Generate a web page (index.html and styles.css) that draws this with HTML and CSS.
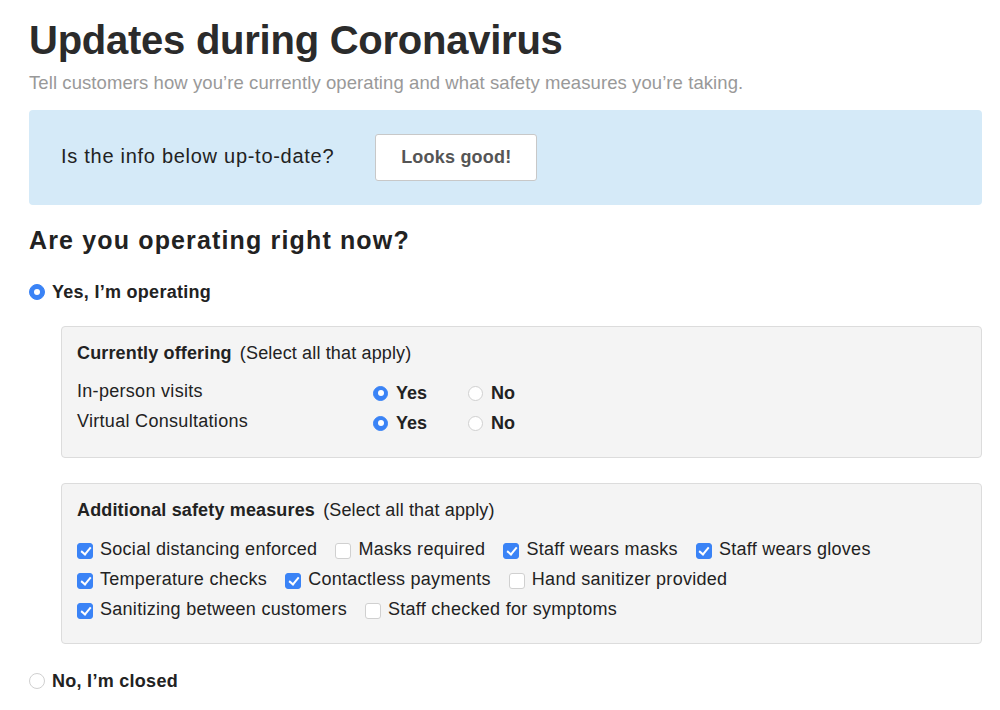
FILE: index.html
```html
<!DOCTYPE html>
<html>
<head>
<meta charset="utf-8">
<link rel="stylesheet" href="styles.css">
</head>
<body>
<div class="page">
  <h1 class="title">Updates during Coronavirus</h1>
  <p class="subtitle">Tell customers how you’re currently operating and what safety measures you’re taking.</p>

  <div class="banner">
    <span class="banner-text">Is the info below up-to-date?</span>
    <button class="btn">Looks good!</button>
  </div>

  <h2 class="question">Are you operating right now?</h2>

  <div class="option top-option">
    <span class="radio on"></span>
    <span class="option-label">Yes, I’m operating</span>
  </div>

  <div class="panel">
    <div class="panel-head"><b>Currently offering</b> (Select all that apply)</div>
    <div class="offer-rows">
      <div class="offer-row">
        <span class="offer-name">In-person visits</span>
        <span class="choice"><span class="radio small on"></span><b>Yes</b></span>
        <span class="choice"><span class="radio small"></span><b>No</b></span>
      </div>
      <div class="offer-row">
        <span class="offer-name">Virtual Consultations</span>
        <span class="choice"><span class="radio small on"></span><b>Yes</b></span>
        <span class="choice"><span class="radio small"></span><b>No</b></span>
      </div>
    </div>
  </div>

  <div class="panel panel2">
    <div class="panel-head"><b>Additional safety measures</b> (Select all that apply)</div>
    <div class="checks">
      <div class="check-row">
        <span class="check-item"><span class="cb on"></span>Social distancing enforced</span>
        <span class="check-item"><span class="cb"></span>Masks required</span>
        <span class="check-item"><span class="cb on"></span>Staff wears masks</span>
        <span class="check-item"><span class="cb on"></span>Staff wears gloves</span>
      </div>
      <div class="check-row">
        <span class="check-item"><span class="cb on"></span>Temperature checks</span>
        <span class="check-item"><span class="cb on"></span>Contactless payments</span>
        <span class="check-item"><span class="cb"></span>Hand sanitizer provided</span>
      </div>
      <div class="check-row">
        <span class="check-item"><span class="cb on"></span>Sanitizing between customers</span>
        <span class="check-item"><span class="cb"></span>Staff checked for symptoms</span>
      </div>
    </div>
  </div>

  <div class="option bottom-option">
    <span class="radio"></span>
    <span class="option-label">No, I’m closed</span>
  </div>
</div>
</body>
</html>
```

FILE: styles.css
```css
* { box-sizing: border-box; }
html, body { margin: 0; padding: 0; background: #fff; }
body {
  font-family: "Liberation Sans", Arial, Helvetica, sans-serif;
  color: #222;
  font-size: 18px;
  letter-spacing: 0.3px;
}
.page {
  padding: 17px 18px 0 29px;
}
.title {
  margin: 0;
  font-size: 40px;
  line-height: 46px;
  font-weight: 700;
  color: #2b2b2b;
  letter-spacing: -0.25px;
}
.subtitle {
  margin: 9px 0 0;
  font-size: 18.5px;
  line-height: 22px;
  letter-spacing: 0.08px;
  color: #999;
}
.banner {
  margin-top: 16px;
  height: 95px;
  background: #d5eaf8;
  border-radius: 4px;
  display: flex;
  align-items: center;
  padding-left: 32px;
}
.banner-text {
  font-size: 20px;
  letter-spacing: 0.72px;
  color: #222;
  margin-top: -2px;
}
.btn {
  margin-left: 41px;
  width: 162px;
  height: 47px;
  background: #fff;
  border: 1px solid #c8c8c8;
  border-radius: 3px;
  font-family: inherit;
  font-size: 18px;
  letter-spacing: 0.2px;
  font-weight: 700;
  color: #555;
  padding: 0;
}
.question {
  margin: 20px 0 0;
  font-size: 25px;
  line-height: 30px;
  letter-spacing: 1.15px;
  font-weight: 700;
  color: #222;
}
.option {
  display: flex;
  align-items: center;
  gap: 7px;
  font-weight: 700;
  line-height: 22px;
  letter-spacing: 0.28px;
}
.top-option { margin-top: 26px; }
.bottom-option { margin-top: 26px; }
.radio {
  width: 16px;
  height: 16px;
  border-radius: 50%;
  border: 1px solid #d0d0d0;
  background: #fff;
  flex: none;
  display: inline-block;
  position: relative;
}
.radio.small {
  width: 15px;
  height: 15px;
}
.radio.on {
  background: #3a83f6;
  border-color: #3a83f6;
}
.radio.on::after {
  content: "";
  position: absolute;
  left: 50%;
  top: 50%;
  width: 6px;
  height: 6px;
  margin: -3px 0 0 -3px;
  border-radius: 50%;
  background: #fff;
}
.panel {
  margin: 23px 0 0 32px;
  background: #f4f4f4;
  border: 1px solid #dcdcdc;
  border-radius: 4px;
  padding: 15px 15px 19px;
}
.panel2 {
  margin-top: 25px;
}
.panel-head {
  line-height: 22px;
  letter-spacing: 0.15px;
}
.panel-head b { margin-right: 3px; letter-spacing: 0.15px; }
.offer-rows { margin-top: 14px; }
.checks { margin-top: 13px; }
.offer-row {
  display: flex;
  align-items: center;
  height: 30px;
}
.offer-name {
  width: 296px;
  margin-top: -3px;
}
.choice {
  display: flex;
  align-items: center;
  gap: 8px;
  width: 95px;
  letter-spacing: 0;
}
.check-row {
  display: flex;
  align-items: center;
  height: 30px;
  gap: 18px;
}
.check-item {
  display: flex;
  align-items: center;
  gap: 7px;
  letter-spacing: 0.28px;
}
.cb {
  width: 16px;
  height: 16px;
  border-radius: 3px;
  border: 1px solid #d0d0d0;
  background: #fff;
  flex: none;
  margin-top: 3px;
  display: inline-block;
  position: relative;
}
.cb.on {
  background: #3a83f6;
  border-color: #3a83f6;
}
.cb.on::after {
  content: "";
  position: absolute;
  left: 4.5px;
  top: 1.5px;
  width: 4px;
  height: 8px;
  border: solid #fff;
  border-width: 0 2px 2px 0;
  transform: rotate(40deg);
}
```
